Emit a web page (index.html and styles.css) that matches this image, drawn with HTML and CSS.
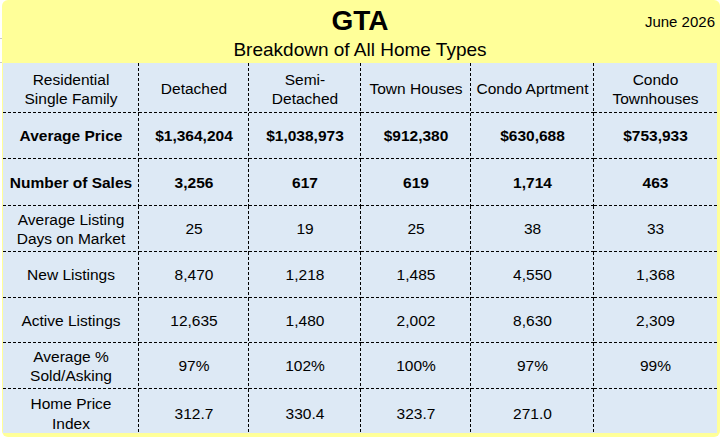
FILE: index.html
```html
<!DOCTYPE html>
<html lang="en">
<head>
<meta charset="utf-8">
<title>GTA Breakdown of All Home Types</title>
<link rel="stylesheet" href="styles.css">
</head>
<body>
<div class="sheet">
  <header class="head">
    <div class="title-row">
      <span class="spacer"></span>
      <h1 class="title">GTA</h1>
      <span class="date">June 2026</span>
    </div>
    <h2 class="subtitle">Breakdown of All Home Types</h2>
  </header>
  <table class="grid">
    <colgroup>
      <col class="c1"><col class="c2"><col class="c3"><col class="c4"><col class="c5"><col class="c6">
    </colgroup>
    <tr class="r-head">
      <td>Residential<br>Single Family</td>
      <td>Detached</td>
      <td>Semi-<br>Detached</td>
      <td>Town Houses</td>
      <td>Condo Aprtment</td>
      <td>Condo<br>Townhouses</td>
    </tr>
    <tr class="r2 bold">
      <td>Average Price</td>
      <td>$1,364,204</td>
      <td>$1,038,973</td>
      <td>$912,380</td>
      <td>$630,688</td>
      <td>$753,933</td>
    </tr>
    <tr class="r3 bold">
      <td>Number of Sales</td>
      <td>3,256</td>
      <td>617</td>
      <td>619</td>
      <td>1,714</td>
      <td>463</td>
    </tr>
    <tr class="r4">
      <td>Average Listing<br>Days on Market</td>
      <td>25</td>
      <td>19</td>
      <td>25</td>
      <td>38</td>
      <td>33</td>
    </tr>
    <tr class="r5">
      <td>New Listings</td>
      <td>8,470</td>
      <td>1,218</td>
      <td>1,485</td>
      <td>4,550</td>
      <td>1,368</td>
    </tr>
    <tr class="r6">
      <td>Active Listings</td>
      <td>12,635</td>
      <td>1,480</td>
      <td>2,002</td>
      <td>8,630</td>
      <td>2,309</td>
    </tr>
    <tr class="r7">
      <td>Average %<br>Sold/Asking</td>
      <td>97%</td>
      <td>102%</td>
      <td>100%</td>
      <td>97%</td>
      <td>99%</td>
    </tr>
    <tr class="r8">
      <td>Home Price<br>Index</td>
      <td>312.7</td>
      <td>330.4</td>
      <td>323.7</td>
      <td>271.0</td>
      <td></td>
    </tr>
  </table>
</div>
</body>
</html>
```
FILE: styles.css
```css
html {
  background:
    linear-gradient(#c9c9c9, #c9c9c9) 0 38px / 2px 1px no-repeat,
    linear-gradient(#c9c9c9, #c9c9c9) 0 62px / 2px 1px no-repeat,
    #ffffff;
}
body {
  margin: 0;
  font-family: "Liberation Sans", Arial, sans-serif;
  color: #000;
}
.sheet {
  margin-left: 2px;
  width: 718px;
  height: 437px;
  box-sizing: border-box;
  padding: 0 3px 5px 1px;
  background: #ffff99;
  border-radius: 6px;
  overflow: hidden;
}
.head {
  height: 63px;
  box-sizing: border-box;
  padding-top: 5px;
}
.title-row {
  display: grid;
  grid-template-columns: 1fr auto 1fr;
  align-items: start;
}
.title {
  margin: 0;
  font-size: 28px;
  line-height: 32px;
  font-weight: bold;
}
.date {
  justify-self: end;
  margin-top: 8px;
  margin-right: 2px;
  font-size: 15px;
  line-height: 17px;
}
.subtitle {
  margin: 2px 0 0;
  text-align: center;
  font-size: 19px;
  line-height: 22px;
  font-weight: normal;
}
.grid {
  width: 714px;
  table-layout: fixed;
  border-collapse: collapse;
  border-spacing: 0;
  background-color: #dde9f5;
  font-size: 15.5px;
  line-height: 19.5px;
}
.c1 { width: 136px; }
.c2 { width: 110px; }
.c3 { width: 112px; }
.c4 { width: 110px; }
.c5 { width: 123px; }
.c6 { width: 123px; }
.grid td {
  padding: 0;
  text-align: center;
  vertical-align: middle;
  white-space: nowrap;
  background:
    repeating-linear-gradient(to bottom, #000 0 3px, transparent 3px 5px) right top / 1px 100% no-repeat,
    repeating-linear-gradient(to right, #000 0 3px, transparent 3px 5px) left bottom / 100% 1px no-repeat;
}
.grid td:last-child {
  background:
    repeating-linear-gradient(to right, #000 0 3px, transparent 3px 5px) left bottom / 100% 1px no-repeat;
}
.grid tr:last-child td {
  background:
    repeating-linear-gradient(to bottom, #000 0 3px, transparent 3px 5px) right top / 1px 100% no-repeat;
}
.grid tr:last-child td:last-child { background: none; }
.bold td { font-weight: bold; }
.r-head { height: 50px; }
.r-head td { padding-top: 2px; }
.r2 { height: 46px; }
.r3 { height: 47px; }
.r4 { height: 46px; }
.r5 { height: 46px; }
.r6 { height: 45px; }
.r7 { height: 46px; }
.r8 { height: 43px; }
.r8 td { padding-top: 5px; }
```
